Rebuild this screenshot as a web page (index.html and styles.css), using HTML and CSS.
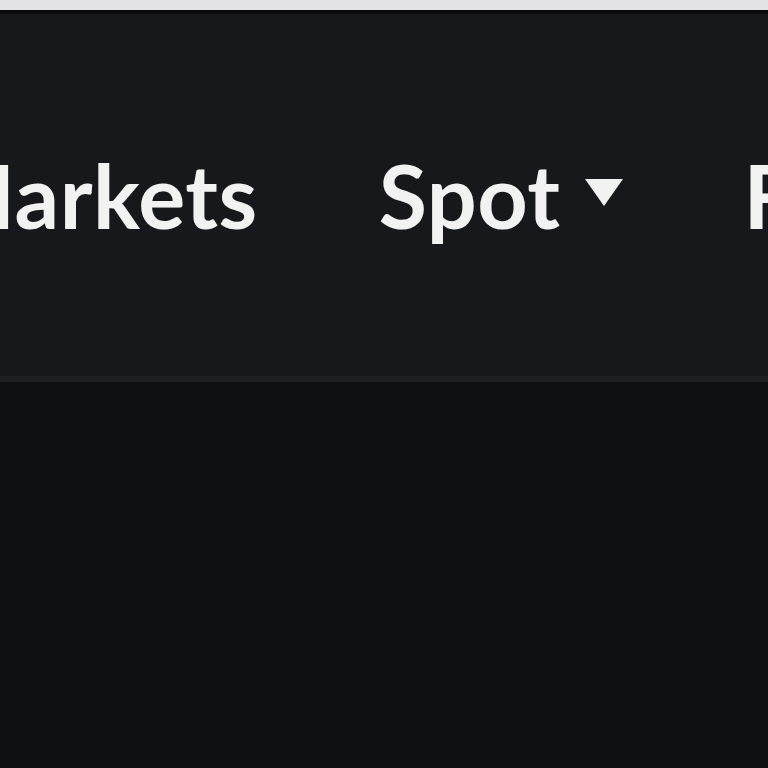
FILE: index.html
```html
<!DOCTYPE html>
<html>
<head>
<meta charset="utf-8">
<link rel="stylesheet" href="styles.css">
</head>
<body>
<div class="topstrip"></div>
<div class="shadow"></div>
<nav class="nav">
  <div class="items">
    <a class="item">Markets</a>
    <a class="item">Spot <span class="caret"></span></a>
    <a class="item">Futures</a>
  </div>
</nav>
<main class="main"></main>
</body>
</html>
```
FILE: styles.css
```css
html, body {
  margin: 0;
  padding: 0;
  background: #0e0f12;
  overflow: hidden;
}
.topstrip {
  height: 10px;
  background: #e3e3e5;
}
.shadow {
  height: 4px;
  background: #0b0b0d;
}
.nav {
  height: 362px;
  background: #17181b;
  border-bottom: 6px solid #1f2024;
  display: flex;
  align-items: center;
  overflow: hidden;
}
.items {
  display: flex;
  align-items: center;
  gap: 121px;
  margin-left: -68px;
  white-space: nowrap;
}
.item {
  font-family: Lato, sans-serif;
  font-weight: 700;
  font-size: 88px;
  letter-spacing: 0.5px;
  color: #f2f2f2;
  display: flex;
  align-items: center;
  line-height: 1;
}
.caret {
  display: inline-block;
  width: 0;
  height: 0;
  margin-left: 24px;
  border-left: 19px solid transparent;
  border-right: 19px solid transparent;
  border-top: 27px solid #f2f2f2;
  margin-top: -6px;
}
.main {
  height: 380px;
}
```
